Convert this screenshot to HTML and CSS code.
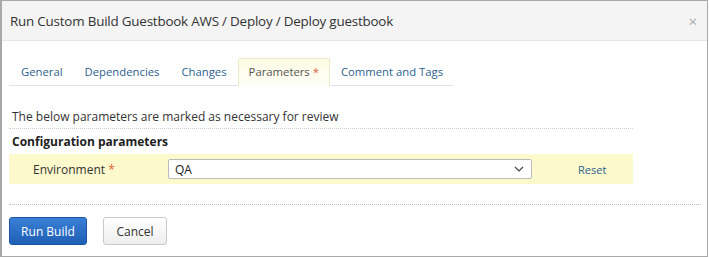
FILE: index.html
```html
<!DOCTYPE html>
<html lang="en">
<head>
    <meta charset="UTF-8">
    <title>Run Custom Build</title>
    <link rel="stylesheet" href="styles.css">
</head>
<body>
<div class="dialog">
    <div class="dialog-header">
        <span class="dialog-title">Run Custom Build Guestbook AWS / Deploy / Deploy guestbook</span>
        <span class="close">&times;</span>
    </div>

    <div class="dialog-body">
        <ul class="tabs">
            <li class="tab">General</li>
            <li class="tab">Dependencies</li>
            <li class="tab">Changes</li>
            <li class="tab tab-selected">Parameters <span class="mandatory">*</span></li>
            <li class="tab">Comment and Tags</li>
        </ul>

        <div class="params">
            <p class="note">The below parameters are marked as necessary for review</p>
            <h3 class="section-title">Configuration parameters</h3>
            <div class="param-row">
                <label class="param-label" for="env">Environment <span class="mandatory">*</span></label>
                <div class="select-box">
                    <span>QA</span>
                    <svg width="10" height="6" viewBox="0 0 10 6"><path d="M1 1l4 4 4-4" fill="none" stroke="#444" stroke-width="1.2"/></svg>
                </div>
                <a class="reset" href="#">Reset</a>
            </div>
        </div>

        <div class="dialog-footer">
            <button class="btn btn-primary">Run Build</button>
            <button class="btn btn-default">Cancel</button>
        </div>
    </div>
</div>
</body>
</html>
```

FILE: styles.css
```css
body {
    margin: 0;
    padding: 0;
    font-family: "Open Sans", "Noto Sans", sans-serif;
    color: #333;
    background: #fff;
}

.dialog {
    width: 705px;
    height: 255px;
    border: 1px solid #a8a8a8;
    border-left-width: 2px;
    overflow: hidden;
}

.dialog-header {
    display: flex;
    justify-content: space-between;
    align-items: center;
    height: 39px;
    padding: 0 10px 0 8px;
    background-color: #f4f4f4;
    border-bottom: 1px solid #e6e6e6;
}

.dialog-title {
    font-size: 13.4px;
    color: #333;
    letter-spacing: -0.2px;
    white-space: nowrap;
}

.close {
    font-size: 15px;
    color: #aaa;
}

.dialog-body {
    padding: 17px 7px 0 7px;
}

.tabs {
    display: flex;
    list-style: none;
    margin: 0;
    padding: 0 0 0 1px;
    width: 443px;
    border-bottom: 1px solid #dde3ea;
    font-size: 11.3px;
    line-height: 16px;
}

.tab {
    flex-shrink: 0;
    white-space: nowrap;
    padding: 5px 10px 5px;
    color: #2d5f8f;
    border: 1px solid transparent;
    border-bottom: none;
    border-radius: 2px 2px 0 0;
}

.tab-selected {
    color: #555;
    background: linear-gradient(#fdfbe4, #fffef6);
    border-color: #ece9c8;
    margin-bottom: -1px;
}

.mandatory {
    color: #e06040;
}

.params {
    width: 624px;
}

.note {
    margin: 0;
    padding: 23px 3px 3px;
    font-size: 12px;
    line-height: 16px;
    border-bottom: 1px dotted #ccc;
}

.section-title {
    margin: 0;
    padding: 5px 3px 4px;
    font-size: 12px;
    line-height: 16px;
    font-weight: bold;
    color: #222;
}

.param-row {
    display: flex;
    align-items: center;
    height: 30px;
    background-color: #fcf9cc;
}

.param-label {
    width: 135px;
    padding-left: 24px;
    font-size: 12px;
}

.select-box {
    display: flex;
    justify-content: space-between;
    align-items: center;
    width: 349px;
    height: 18px;
    padding: 0 7px 0 6px;
    background: #fff;
    border: 1px solid #bbb;
    border-radius: 2px;
    font-size: 12px;
    color: #222;
}

.reset {
    margin-left: 46px;
    font-size: 11px;
    color: #2d5f8f;
    text-decoration: none;
}

.dialog-footer {
    margin-top: 20px;
    padding-top: 12px;
    border-top: 1px dotted #bbb;
    width: 692px;
    display: flex;
    gap: 16px;
}

.btn {
    height: 28px;
    padding: 0;
    white-space: nowrap;
    font-family: "Open Sans", "Noto Sans", sans-serif;
    font-size: 12px;
    border-radius: 3px;
    cursor: pointer;
}

.btn-primary {
    width: 78px;
    color: #fff;
    background: linear-gradient(#3a7fd6, #1f5fb5);
    border: 1px solid #1a55a3;
}

.btn-default {
    width: 64px;
    color: #333;
    background: linear-gradient(#fff, #eee);
    border: 1px solid #c8c8c8;
}
```
